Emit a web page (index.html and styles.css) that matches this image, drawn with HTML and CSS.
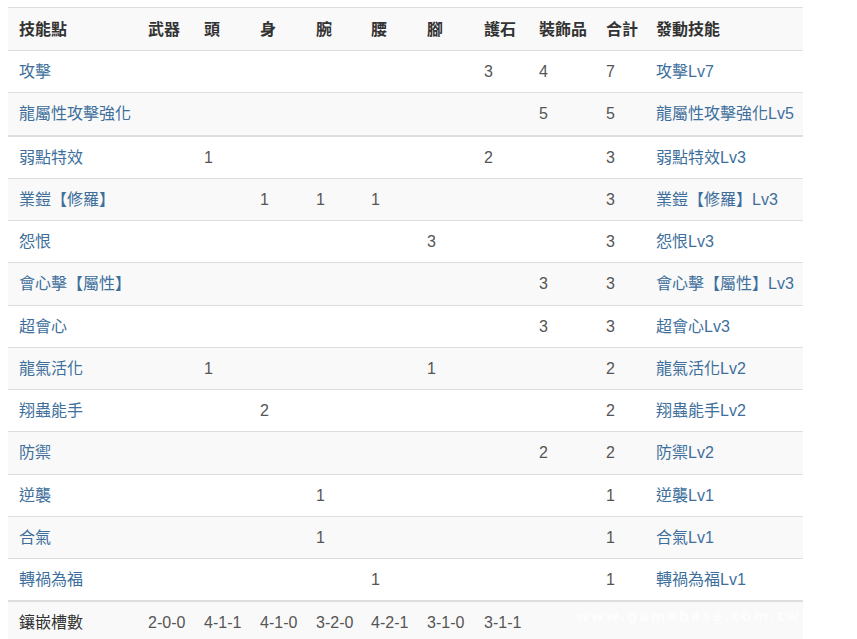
FILE: index.html
```html
<!DOCTYPE html>
<html lang="zh-Hant">
<head>
<meta charset="utf-8">
<title>技能點</title>
<link rel="stylesheet" href="styles.css">
</head>
<body>
<div class="wrap">
<table class="skills">
  <colgroup>
    <col class="c-name"><col class="c-n"><col class="c-n"><col class="c-n"><col class="c-n5"><col class="c-n"><col class="c-n7"><col class="c-n5"><col class="c-deco"><col class="c-sum"><col class="c-skill">
  </colgroup>
  <thead>
    <tr><th>技能點</th><th>武器</th><th>頭</th><th>身</th><th>腕</th><th>腰</th><th>腳</th><th>護石</th><th>裝飾品</th><th>合計</th><th>發動技能</th></tr>
  </thead>
  <tbody>
    <tr><td class="lnk">攻擊</td><td></td><td></td><td></td><td></td><td></td><td></td><td>3</td><td>4</td><td>7</td><td class="lnk">攻擊Lv7</td></tr>
    <tr><td class="lnk">龍屬性攻擊強化</td><td></td><td></td><td></td><td></td><td></td><td></td><td></td><td>5</td><td>5</td><td class="lnk">龍屬性攻擊強化Lv5</td></tr>
  </tbody>
  <tbody>
    <tr><td class="lnk">弱點特效</td><td></td><td>1</td><td></td><td></td><td></td><td></td><td>2</td><td></td><td>3</td><td class="lnk">弱點特效Lv3</td></tr>
    <tr><td class="lnk">業鎧【修羅】</td><td></td><td></td><td>1</td><td>1</td><td>1</td><td></td><td></td><td></td><td>3</td><td class="lnk">業鎧【修羅】Lv3</td></tr>
    <tr><td class="lnk">怨恨</td><td></td><td></td><td></td><td></td><td></td><td>3</td><td></td><td></td><td>3</td><td class="lnk">怨恨Lv3</td></tr>
    <tr><td class="lnk">會心擊【屬性】</td><td></td><td></td><td></td><td></td><td></td><td></td><td></td><td>3</td><td>3</td><td class="lnk">會心擊【屬性】Lv3</td></tr>
    <tr><td class="lnk">超會心</td><td></td><td></td><td></td><td></td><td></td><td></td><td></td><td>3</td><td>3</td><td class="lnk">超會心Lv3</td></tr>
    <tr><td class="lnk">龍氣活化</td><td></td><td>1</td><td></td><td></td><td></td><td>1</td><td></td><td></td><td>2</td><td class="lnk">龍氣活化Lv2</td></tr>
    <tr><td class="lnk">翔蟲能手</td><td></td><td></td><td>2</td><td></td><td></td><td></td><td></td><td></td><td>2</td><td class="lnk">翔蟲能手Lv2</td></tr>
    <tr><td class="lnk">防禦</td><td></td><td></td><td></td><td></td><td></td><td></td><td></td><td>2</td><td>2</td><td class="lnk">防禦Lv2</td></tr>
    <tr><td class="lnk">逆襲</td><td></td><td></td><td></td><td>1</td><td></td><td></td><td></td><td></td><td>1</td><td class="lnk">逆襲Lv1</td></tr>
    <tr><td class="lnk">合氣</td><td></td><td></td><td></td><td>1</td><td></td><td></td><td></td><td></td><td>1</td><td class="lnk">合氣Lv1</td></tr>
    <tr><td class="lnk">轉禍為福</td><td></td><td></td><td></td><td></td><td>1</td><td></td><td></td><td></td><td>1</td><td class="lnk">轉禍為福Lv1</td></tr>
  </tbody>
  <tfoot>
    <tr><td class="label">鑲嵌槽數</td><td>2-0-0</td><td>4-1-1</td><td>4-1-0</td><td>3-2-0</td><td>4-2-1</td><td>3-1-0</td><td>3-1-1</td><td></td><td></td><td></td></tr>
  </tfoot>
</table>
<div class="watermark">www.gamebase.com.tw</div>
</div>
</body>
</html>
```

FILE: styles.css
```css
html, body {
  margin: 0;
  padding: 0;
  background: #fff;
}
body {
  padding: 7px 0 0 8px;
  font-family: "Liberation Sans", "Noto Sans CJK TC", sans-serif;
  font-size: 16px;
  color: #555;
}
.wrap {
  position: relative;
  width: 795px;
}
.skills {
  width: 795px;
  table-layout: fixed;
  border-collapse: collapse;
  border-spacing: 0;
}
.c-name { width: 129px; }
.c-n { width: 56px; }
.c-n5 { width: 55px; }
.c-n7 { width: 57px; }
.c-deco { width: 67px; }
.c-sum { width: 50px; }
.c-skill { width: 158px; }

.skills th,
.skills td {
  padding: 8px 0 8px 11px;
  line-height: 25.25px;
  text-align: left;
  vertical-align: middle;
  border-top: 1px solid #dedede;
  white-space: nowrap;
  overflow: hidden;
}
.skills th {
  color: #333;
  font-weight: bold;
  line-height: 26px;
  padding-top: 9px;
  padding-bottom: 7px;
}
.skills thead tr {
  background: #f9f9f9;
}
.skills tbody tr:nth-child(even) {
  background: #f9f9f9;
}
.skills tbody + tbody tr:first-child td,
.skills tfoot tr td {
  border-top: 2px solid #dedede;
}
.skills tfoot tr {
  background: #f9f9f9;
}
.skills td.lnk {
  color: #3e6f9c;
}
.skills td.label {
  color: #333;
}
.watermark {
  position: absolute;
  right: 2px;
  bottom: 20px;
  font-family: "DejaVu Sans", sans-serif;
  font-weight: bold;
  font-size: 14px;
  letter-spacing: 2px;
  color: rgba(255, 255, 255, 0.75);
  pointer-events: none;
}
```
